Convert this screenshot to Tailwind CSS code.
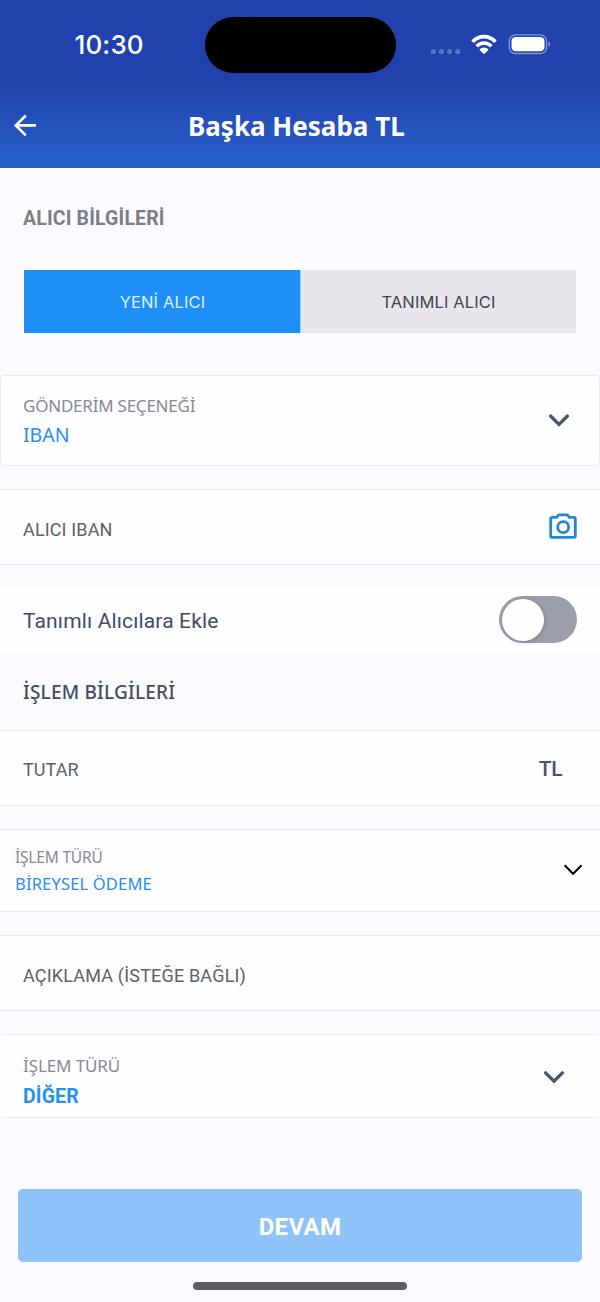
<!DOCTYPE html>
<html lang="tr">
<head>
<meta charset="utf-8">
<title>Başka Hesaba TL</title>
<script src="https://cdn.jsdelivr.net/npm/@tailwindcss/browser@4"></script>
</head>
<body class="bg-[#fbfafe]">
<div class="flex h-[1302px] w-[600px] flex-col overflow-hidden">

  <header class="h-[168px] shrink-0 bg-linear-to-b from-[#2142ac] from-50% to-[#2961cb] text-white">
    <div class="flex h-[88px] items-start">
      <div class="w-[204.500px] shrink-0 pt-[33px] pl-[74.500px] font-['Inter',sans-serif] text-[26px] leading-6 font-[550] tracking-[0.150px]">10:30</div>
      <div class="mt-[17px] h-14 w-[191px] shrink-0 rounded-full bg-black"></div>
      <div class="flex pt-[33px] pl-[34px]">
        <svg class="mt-[15px] h-[7px] w-[31px]" viewBox="0 0 31 7" fill="#5673c6"><circle cx="3.3" cy="3.5" r="2.6"/><circle cx="11.4" cy="3.5" r="2.6"/><circle cx="19.5" cy="3.5" r="2.6"/><circle cx="27.6" cy="3.5" r="2.6"/></svg>
        <svg class="ml-[9.500px] h-6 w-7" viewBox="0 0 28 24" fill="none" stroke="#fff"><path d="M2.600 8.700C8.900 1.900 19.100 1.900 25.400 8.700" stroke-width="3.600"/><path d="M6.600 13.200c4.200-4.400 10.600-4.400 14.800 0" stroke-width="3.500"/><path d="M14 21.300l-4.600-4.600c2.600-2.800 6.600-2.800 9.200 0z" fill="#fff" stroke="none"/></svg>
        <svg class="ml-[9px] h-6 w-11" viewBox="0 0 44 24"><rect x="2.300" y="1.900" width="37.2" height="18.6" rx="6" fill="none" stroke="#7e97d8" stroke-width="1.4"/><rect x="4.500" y="4.1" width="33" height="14.2" rx="4.2" fill="#fff"/><path d="M41.500 8.500c2.400 1 2.400 4.400 0 5.400z" fill="#7e97d8"/></svg>
      </div>
    </div>
    <div class="flex items-start">
      <svg class="mt-[25px] ml-3 h-6 w-6" viewBox="0 0 24 24" fill="none" stroke="#fff" stroke-width="2.6"><path d="M24 12.400H4M13.800 2.500l-10 9.900 10 9.900"/></svg>
      <h1 class="mt-[26px] ml-[152px] font-['Noto_Sans',sans-serif] text-[26px] leading-6 font-bold">Başka Hesaba TL</h1>
    </div>
  </header>

  <section class="h-[207px] shrink-0 pt-[39px]">
    <h2 class="pl-[23px] font-['Roboto',sans-serif] text-[19.500px] leading-6 font-bold tracking-[0.15px] text-[#7c7e86]">ALICI BİLGİLERİ</h2>
    <div class="mx-6 mt-[39px] flex h-[63px] font-['Inter',sans-serif] text-[16.500px] leading-6 font-normal">
      <div class="flex w-[277px] justify-center border-r border-[#8fd6ff] bg-[#1f8ff8] pt-5 pl-px tracking-[0.150px] text-[#dcf2ff]">YENİ ALICI</div>
      <div class="flex grow justify-center bg-[#e8e6ec] pt-5 tracking-[0.130px] text-[#42444e]">TANIMLI ALICI</div>
    </div>
  </section>

  <section class="flex h-[91px] shrink-0 items-start justify-between rounded-[4px] border border-[#e9e8ec] bg-[#fefdff] pl-[22px] font-['Noto_Sans',sans-serif] leading-6">
    <div>
      <div class="pt-[18px] text-[17px] tracking-[-0.230px] text-[#858a95]">GÖNDERİM SEÇENEĞİ</div>
      <div class="pt-[5px] text-[19.500px] text-[#2490f2]">IBAN</div>
    </div>
    <svg class="mt-[32px] mr-7 h-6 w-6" viewBox="0 0 24 24" fill="none" stroke="#4b5472" stroke-width="3.300" stroke-linecap="round"><path d="M3.600 8l8.400 8.400L20.400 8"/></svg>
  </section>

  <section class="mt-[23px] flex h-[76px] shrink-0 items-start justify-between border-y border-[#e9e8ec] bg-[#fefdff] pl-[23px]">
    <div class="pt-[28px] font-['Roboto',sans-serif] text-[18px] leading-6 tracking-[0.140px] text-[#606166]">ALICI IBAN</div>
    <svg class="mt-[22px] mr-[22px] h-7 w-[30px]" viewBox="0 0 30 28" fill="none" stroke="#2587d4" stroke-width="2.800"><path d="M4 5.400h4.600l2-2.500h8.800l2 2.500H26a1.300 1.300 0 0 1 1.300 1.300v17.400a1.300 1.300 0 0 1-1.300 1.300H4a1.300 1.300 0 0 1-1.300-1.300V6.700A1.300 1.300 0 0 1 4 5.400z"/><circle cx="15.200" cy="15.200" r="5.500"/></svg>
  </section>

  <section class="mt-[23px] flex h-[64px] shrink-0 items-start justify-between bg-[#fefdff] pl-[23px]">
    <div class="pt-[21px] font-['Roboto',sans-serif] text-[21px] leading-6 tracking-[0.140px] text-[#434c63]">Tanımlı Alıcılara Ekle</div>
    <div class="mt-2 mr-[23px] flex h-[47px] w-[78px] items-center rounded-full bg-[#9c9eab] pl-[3px]">
      <div class="h-[42px] w-[42px] rounded-full bg-[#fefdff] shadow-[1px_1px_4px_rgba(60,60,70,0.300)]"></div>
    </div>
  </section>

  <h2 class="h-[78px] shrink-0 pt-[28px] pl-[23px] font-['Noto_Sans',sans-serif] text-[19px] leading-6 font-medium tracking-[0.200px] text-[#434c63]">İŞLEM BİLGİLERİ</h2>

  <section class="flex h-[76px] shrink-0 items-start justify-between border-y border-[#e9e8ec] bg-[#fefdff] pr-[38px] pl-[23px] font-['Roboto',sans-serif] leading-6">
    <div class="pt-[27px] text-[18px] tracking-[0.070px] text-[#606166]">TUTAR</div>
    <div class="pt-[26px] text-[21px] font-medium tracking-[-0.500px] text-[#4b5369]">TL</div>
  </section>

  <section class="mt-[23px] flex h-[83px] shrink-0 items-start justify-between border-y border-[#e9e8ec] bg-[#fefdff] pl-[15px] font-['Noto_Sans',sans-serif] leading-6">
    <div>
      <div class="pt-[15px] text-[15.500px] tracking-[-0.200px] text-[#858a95]">İŞLEM TÜRÜ</div>
      <div class="pt-[3px] text-[16.500px] tracking-[0.170px] text-[#2490f2]">BİREYSEL ÖDEME</div>
    </div>
    <svg class="mt-[28px] mr-[15px] h-6 w-6" viewBox="0 0 24 24" fill="none" stroke="#000" stroke-width="2"><path d="M3.600 7.300l8.500 8.500 8.500-8.500"/></svg>
  </section>

  <section class="mt-[23px] h-[76px] shrink-0 border-y border-[#e9e8ec] bg-[#fefdff] pt-[28px] pl-[23px] font-['Roboto',sans-serif] text-[18px] leading-6 tracking-[0.180px] text-[#606166]">AÇIKLAMA (İSTEĞE BAĞLI)</section>

  <section class="mt-[23px] flex h-[84px] shrink-0 items-start justify-between rounded-[5px] border-y border-[#e9e8ec] bg-[#fefdff] pl-[23px] leading-6">
    <div>
      <div class="pt-[19px] font-['Noto_Sans',sans-serif] text-[17px] tracking-[-0.100px] text-[#858a95]">İŞLEM TÜRÜ</div>
      <div class="pt-[7px] font-['Roboto',sans-serif] text-[19.500px] font-bold tracking-[0.150px] text-[#2490f2]">DİĞER</div>
    </div>
    <svg class="mt-[30px] mr-[34px] h-6 w-6" viewBox="0 0 24 24" fill="none" stroke="#4b5472" stroke-width="3.300" stroke-linecap="round"><path d="M3.600 7.800l8.400 8.400L20.400 7.800"/></svg>
  </section>

  <button class="mx-[18px] mt-[71px] flex h-[73px] shrink-0 justify-center rounded-[5px] bg-[#8ec3fa] pt-[25.500px] font-['Roboto',sans-serif] text-[24px] leading-6 font-bold tracking-[0.300px] text-white">DEVAM</button>
  <div class="mx-auto mt-5 h-2 w-[214px] shrink-0 rounded-full bg-[#5d5e65]"></div>
</div>
</body>
</html>
